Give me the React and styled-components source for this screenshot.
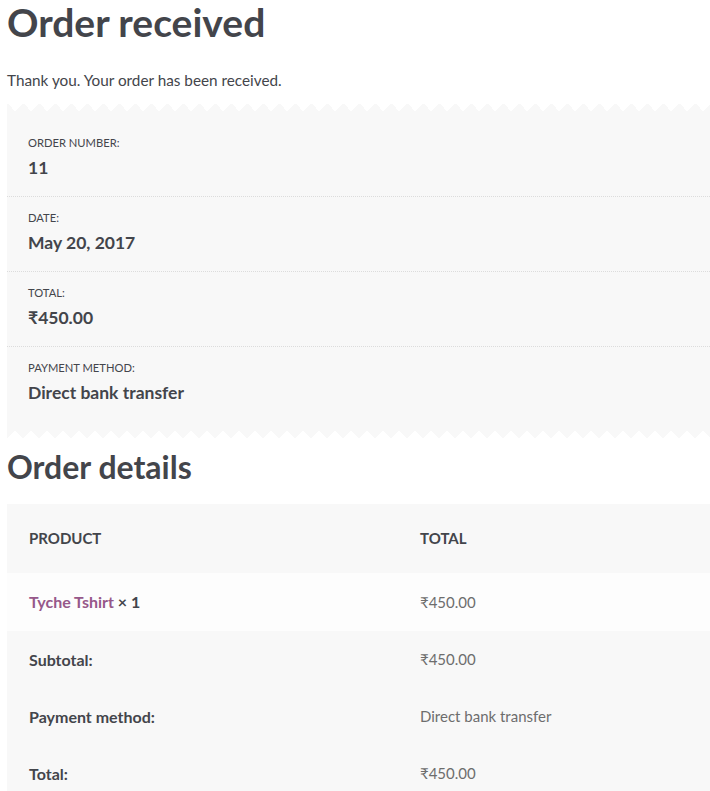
import React from 'react';
import styled, { createGlobalStyle } from 'styled-components';

const GlobalStyle = createGlobalStyle`
	body {
		margin: 0;
		background: #ffffff;
		font-family: Lato, "Noto Sans", "DejaVu Sans", sans-serif;
		color: #43454b;
	}
`;

const details = [
	{ label: 'Order number:', value: '11' },
	{ label: 'Date:', value: 'May 20, 2017' },
	{ label: 'Total:', value: '₹450.00' },
	{ label: 'Payment method:', value: 'Direct bank transfer' },
];

const totals = [
	{ label: 'Subtotal:', value: '₹450.00' },
	{ label: 'Payment method:', value: 'Direct bank transfer' },
	{ label: 'Total:', value: '₹450.00' },
];

function App() {
	return (
		<>
			<GlobalStyle />
			<Page>
				<Title>Order received</Title>
				<Notice>Thank you. Your order has been received.</Notice>

				<Receipt>
					<Edge $side="top" />
					<DetailList>
						{details.map((item) => (
							<DetailItem key={item.label}>
								<DetailLabel>{item.label}</DetailLabel>
								<DetailValue>{item.value}</DetailValue>
							</DetailItem>
						))}
					</DetailList>
					<Edge $side="bottom" />
				</Receipt>

				<SubTitle>Order details</SubTitle>

				<Table>
					<colgroup>
						<col style={{ width: '391px' }} />
						<col />
					</colgroup>
					<thead>
						<tr>
							<HeadCell>Product</HeadCell>
							<HeadCell>Total</HeadCell>
						</tr>
					</thead>
					<tbody>
						<BodyRow>
							<Cell>
								<ProductLink href="#">Tyche Tshirt</ProductLink>
								<Qty> × 1</Qty>
							</Cell>
							<Cell>₹450.00</Cell>
						</BodyRow>
					</tbody>
					<tfoot>
						{totals.map((row) => (
							<FootRow key={row.label}>
								<FootLabel>{row.label}</FootLabel>
								<Cell>{row.value}</Cell>
							</FootRow>
						))}
					</tfoot>
				</Table>
			</Page>
		</>
	);
}

const Page = styled.div`
	padding: 0 0 0 7px;
`;

const Title = styled.h1`
	margin: 0;
	font-size: 39px;
	line-height: 44px;
	font-weight: 700;
	color: #43454b;
`;

const Notice = styled.p`
	margin: 24px 0 11px;
	font-size: 15.3px;
	line-height: 24px;
	color: #43454b;
`;

const Receipt = styled.div`
	display: flex;
	flex-direction: column;
`;

const Edge = styled.div`
	height: 8px;
	background: ${({ $side }) =>
		$side === 'top'
			? 'conic-gradient(from 135deg at 50% 0, #f8f8f8 90deg, transparent 0)'
			: 'conic-gradient(from -45deg at 50% 100%, #f8f8f8 90deg, transparent 0)'};
	background-size: 16px 8px;
	background-position: -8px 0;
	background-repeat: repeat-x;
`;

const DetailList = styled.ul`
	list-style: none;
	margin: 0;
	padding: 11px 0 9px;
	background: #f8f8f8;
`;

const DetailItem = styled.li`
	padding: 13px 21px 18px;
	border-bottom: 1px dotted #dcdcdc;
	&:last-child {
		border-bottom: none;
	}
`;

const DetailLabel = styled.div`
	font-size: 11.2px;
	line-height: 16px;
	text-transform: uppercase;
	color: #43454b;
`;

const DetailValue = styled.strong`
	display: block;
	margin-top: 6px;
	font-size: 17.5px;
	line-height: 21px;
	font-weight: 700;
	color: #43454b;
`;

const SubTitle = styled.h2`
	margin: 9px 0 17px;
	font-size: 32px;
	line-height: 40px;
	font-weight: 700;
	color: #43454b;
`;

const Table = styled.table`
	width: 100%;
	table-layout: fixed;
	border-collapse: collapse;
	font-size: 15px;
	line-height: 25px;
`;

const HeadCell = styled.th`
	padding: 22px 22px;
	text-align: left;
	text-transform: uppercase;
	font-weight: 700;
	color: #43454b;
	background: #f8f8f8;
`;

const BodyRow = styled.tr`
	background: #fdfdfd;
`;

const FootRow = styled.tr`
	background: #f8f8f8;
`;

const Cell = styled.td`
	padding: 16px 22px;
	text-align: left;
	color: #6d6d6d;
`;

const FootLabel = styled.th`
	padding: 16px 22px;
	text-align: left;
	font-size: 16px;
	font-weight: 700;
	color: #43454b;
`;

const ProductLink = styled.a`
	font-size: 16px;
	color: #96588a;
	font-weight: 700;
	text-decoration: none;
`;

const Qty = styled.strong`
	font-size: 16px;
	font-weight: 700;
	color: #43454b;
`;

export default App;
